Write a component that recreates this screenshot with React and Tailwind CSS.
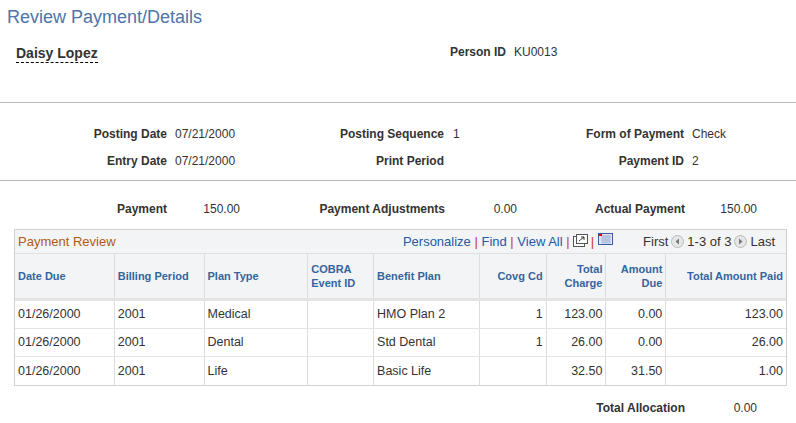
export default function App() {
  const lab = "font-bold text-[#333]";
  const val = "text-[#333]";
  const rows = [
    ["01/26/2000","2001","Medical","","HMO Plan 2","1","123.00","0.00","123.00"],
    ["01/26/2000","2001","Dental","","Std Dental","1","26.00","0.00","26.00"],
    ["01/26/2000","2001","Life","","Basic Life","","32.50","31.50","1.00"],
  ];
  const widths = [100,90,104,66,106,67,60,60,120];
  const right = [false,false,false,false,false,true,true,true,true];
  const heads = ["Date Due","Billing Period","Plan Type","COBRA Event ID","Benefit Plan","Covg Cd","Total Charge","Amount Due","Total Amount Paid"];
  return (
    <div className="w-[796px] h-[423px] bg-white text-[12px] overflow-hidden" style={{fontFamily:'"Liberation Sans", Arial, sans-serif'}}>
      <div className="pl-[7px] pt-[6px] text-[18px] text-[#4c75a8] leading-[22px]">Review Payment/Details</div>
      <div className="flex items-start h-[52px] pt-[15px]">
        <div className="ml-[16px] w-[434px]"><span className="font-bold text-[14px] text-[#333] border-b border-dashed border-black pb-[1px]">Daisy Lopez</span></div>
        <span className={lab}>Person ID</span><span className={val + " ml-[8px]"}>KU0013</span>
      </div>
      <div className="mt-[22px] border-t border-[#bbb]" />
      <div className="grid grid-cols-[167px_72px_205px_72px_168px_72px] pt-[24px] gap-y-[13px] leading-[14px]">
        <div className={lab+" text-right"}>Posting Date</div><div className={val+" pl-[8px] whitespace-nowrap"}>07/21/2000</div>
        <div className={lab+" text-right"}>Posting Sequence</div><div className={val+" pl-[9px]"}>1</div>
        <div className={lab+" text-right"}>Form of Payment</div><div className={val+" pl-[8px]"}>Check</div>
        <div className={lab+" text-right"}>Entry Date</div><div className={val+" pl-[8px] whitespace-nowrap"}>07/21/2000</div>
        <div className={lab+" text-right"}>Print Period</div><div />
        <div className={lab+" text-right"}>Payment ID</div><div className={val+" pl-[8px]"}>2</div>
      </div>
      <div className="mt-[12px] border-t border-[#bbb]" />
      <div className="flex pt-[21px] leading-[14px]">
        <div className={lab+" w-[167px] text-right"}>Payment</div>
        <div className={val+" w-[73px] text-right"}>150.00</div>
        <div className={lab+" w-[205px] text-right"}>Payment Adjustments</div>
        <div className={val+" w-[72px] text-right"}>0.00</div>
        <div className={lab+" w-[168px] text-right"}>Actual Payment</div>
        <div className={val+" w-[72px] text-right"}>150.00</div>
      </div>
      <div className="ml-[14px] mt-[13px] w-[773px] border border-[#d0d0d0]">
        <div className="h-[24px] bg-[#f2f4f5] flex items-center px-[3px] border-b border-[#e0e0e0] text-[13px]">
          <span className="text-[#b35a12]">Payment Review</span>
          <span className="ml-auto text-[#245aa3]">Personalize <span className="text-[#c33]">|</span> Find <span className="text-[#c33]">|</span> View All <span className="text-[#c33]">|</span></span>
          <svg className="mx-[3px] mb-[3px]" width="15" height="13" viewBox="0 0 15 13"><rect x="0.5" y="2.5" width="11" height="10" fill="white" stroke="#555"/><rect x="3.5" y="0.5" width="11" height="9" fill="white" stroke="#555"/><path d="M6 7l5-4M8 3h3v3" stroke="#333" fill="none"/></svg>
          <span className="text-[#c33]">|</span>
          <svg className="mx-[4px] mb-[5px]" width="15" height="12" viewBox="0 0 15 12"><rect x="0.5" y="0.5" width="14" height="11" fill="#dfe6f3" stroke="#3a5da0"/><path d="M3 3h10M3 5h10M3 7h10M3 9h10M5 2v9M7 2v9M9 2v9M11 2v9" stroke="#8fa4cc" strokeWidth="0.6"/><rect x="1" y="1" width="3" height="2" fill="#e00"/></svg>
          <span className="ml-[26px] text-[#333]">First</span>
          <svg className="mx-[3px]" width="13" height="13" viewBox="0 0 13 13"><circle cx="6.5" cy="6.5" r="6" fill="#e6e6e6" stroke="#bbb"/><path d="M8 3.5L4.5 6.5 8 9.5z" fill="#777"/></svg>
          <span className="text-[#333]">1-3 of 3</span>
          <svg className="mx-[3px]" width="13" height="13" viewBox="0 0 13 13"><circle cx="6.5" cy="6.5" r="6" fill="#e6e6e6" stroke="#bbb"/><path d="M5 3.5L8.5 6.5 5 9.5z" fill="#777"/></svg>
          <span className="text-[#333] mr-[8px]">Last</span>
        </div>
        <div className="flex h-[47px] bg-[#f2f4f5] border-b-[3px] border-[#e4e4e4]">
          {heads.map((h,i)=>(
            <div key={i} style={{width:widths[i]}} className={"flex items-center px-[3px] font-bold text-[11px] leading-[14px] text-[#35659f] border-r border-[#ddd] last:border-r-0 "+(right[i]?"justify-end text-right":"")}>{h}</div>
          ))}
        </div>
        {rows.map((r,j)=>(
          <div key={j} className="flex h-[28px] border-b border-[#e4e4e4] last:border-b-0">
            {r.map((c,i)=>(
              <div key={i} style={{width:widths[i]}} className={"flex items-center px-[3px] text-[12.5px] text-[#333] border-r border-[#ddd] last:border-r-0 "+(right[i]?"justify-end":"")}>{c}</div>
            ))}
          </div>
        ))}
      </div>
      <div className="flex pt-[15px] leading-[14px]">
        <div className={lab+" w-[685px] text-right"}>Total Allocation</div>
        <div className={val+" w-[72px] text-right"}>0.00</div>
      </div>
    </div>
  );
}
